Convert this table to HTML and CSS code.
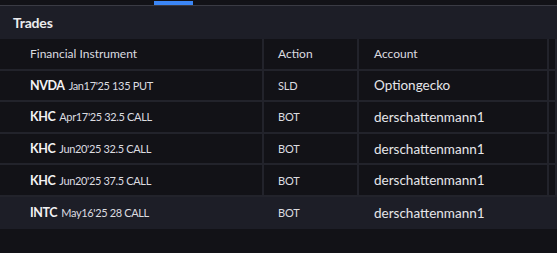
FILE: index.html
```html
<!DOCTYPE html>
<html lang="en">
<head>
  <meta charset="UTF-8">
  <meta name="viewport" content="width=device-width, initial-scale=1.0">
  <title>Trades</title>
  <link rel="stylesheet" href="styles.css">
</head>
<body>
  <div class="tabs">
    <span class="tab-indicator"></span>
  </div>
  <div class="panel-head">
    <h2>Trades</h2>
  </div>
  <div class="trades">
    <div class="row head">
      <div class="cell">Financial Instrument</div>
      <div class="cell">Action</div>
      <div class="cell">Account</div>
      <div class="cell"></div>
    </div>
    <div class="row">
      <div class="cell"><span class="symbol">NVDA</span><span class="contract">Jan17'25 135 PUT</span></div>
      <div class="cell action">SLD</div>
      <div class="cell account">Optiongecko</div>
      <div class="cell"></div>
    </div>
    <div class="row">
      <div class="cell"><span class="symbol">KHC</span><span class="contract">Apr17'25 32.5 CALL</span></div>
      <div class="cell action">BOT</div>
      <div class="cell account">derschattenmann1</div>
      <div class="cell"></div>
    </div>
    <div class="row">
      <div class="cell"><span class="symbol">KHC</span><span class="contract">Jun20'25 32.5 CALL</span></div>
      <div class="cell action">BOT</div>
      <div class="cell account">derschattenmann1</div>
      <div class="cell"></div>
    </div>
    <div class="row">
      <div class="cell"><span class="symbol">KHC</span><span class="contract">Jun20'25 37.5 CALL</span></div>
      <div class="cell action">BOT</div>
      <div class="cell account">derschattenmann1</div>
      <div class="cell"></div>
    </div>
    <div class="row active">
      <div class="cell"><span class="symbol">INTC</span><span class="contract">May16'25 28 CALL</span></div>
      <div class="cell action">BOT</div>
      <div class="cell account">derschattenmann1</div>
      <div class="cell"></div>
    </div>
  </div>
</body>
</html>
```

FILE: styles.css
```css
* {
  margin: 0;
  padding: 0;
  box-sizing: border-box;
  font-family: 'Lato', 'Roboto', sans-serif;
}

body {
  background: #121217;
  color: #e4e4e6;
  overflow: hidden;
}

.tabs {
  height: 6px;
  padding-top: 1px;
  padding-left: 154px;
  border-bottom: 1px solid #3a3b44;
}

.tab-indicator {
  display: block;
  width: 39px;
  height: 4px;
  background: #3b86f6;
}

.panel-head {
  height: 33px;
  display: flex;
  align-items: center;
  padding-left: 13px;
  background: #1d1e27;
}

.panel-head h2 {
  font-size: 14px;
  font-weight: 700;
  color: #ececee;
  letter-spacing: -0.2px;
}

.row {
  display: grid;
  grid-template-columns: 264px 95px 190px 1fr;
  height: 31.6px;
  border-bottom: 2px solid #22232b;
}

.cell {
  display: flex;
  align-items: center;
  border-right: 2px solid #22232b;
  white-space: nowrap;
  overflow: hidden;
}

.cell:nth-child(1) {
  padding-left: 30px;
}

.cell:nth-child(2) {
  padding-left: 14px;
}

.cell:nth-child(3) {
  padding-left: 15px;
}

.head .cell {
  font-size: 12px;
  color: #dcdce0;
}

.symbol {
  font-size: 12.5px;
  font-weight: 700;
  color: #f2f2f4;
  letter-spacing: -0.4px;
  margin-right: 4px;
}

.contract {
  font-size: 11px;
  color: #dcdce0;
  letter-spacing: -0.35px;
}

.action {
  font-size: 11px;
  color: #dcdce0;
  letter-spacing: -0.2px;
}

.account {
  font-size: 13.5px;
  color: #e6e6ea;
}

.row.active {
  background: #1d1e27;
  border-bottom: none;
}

.row.active .cell {
  border-right: none;
}
```
